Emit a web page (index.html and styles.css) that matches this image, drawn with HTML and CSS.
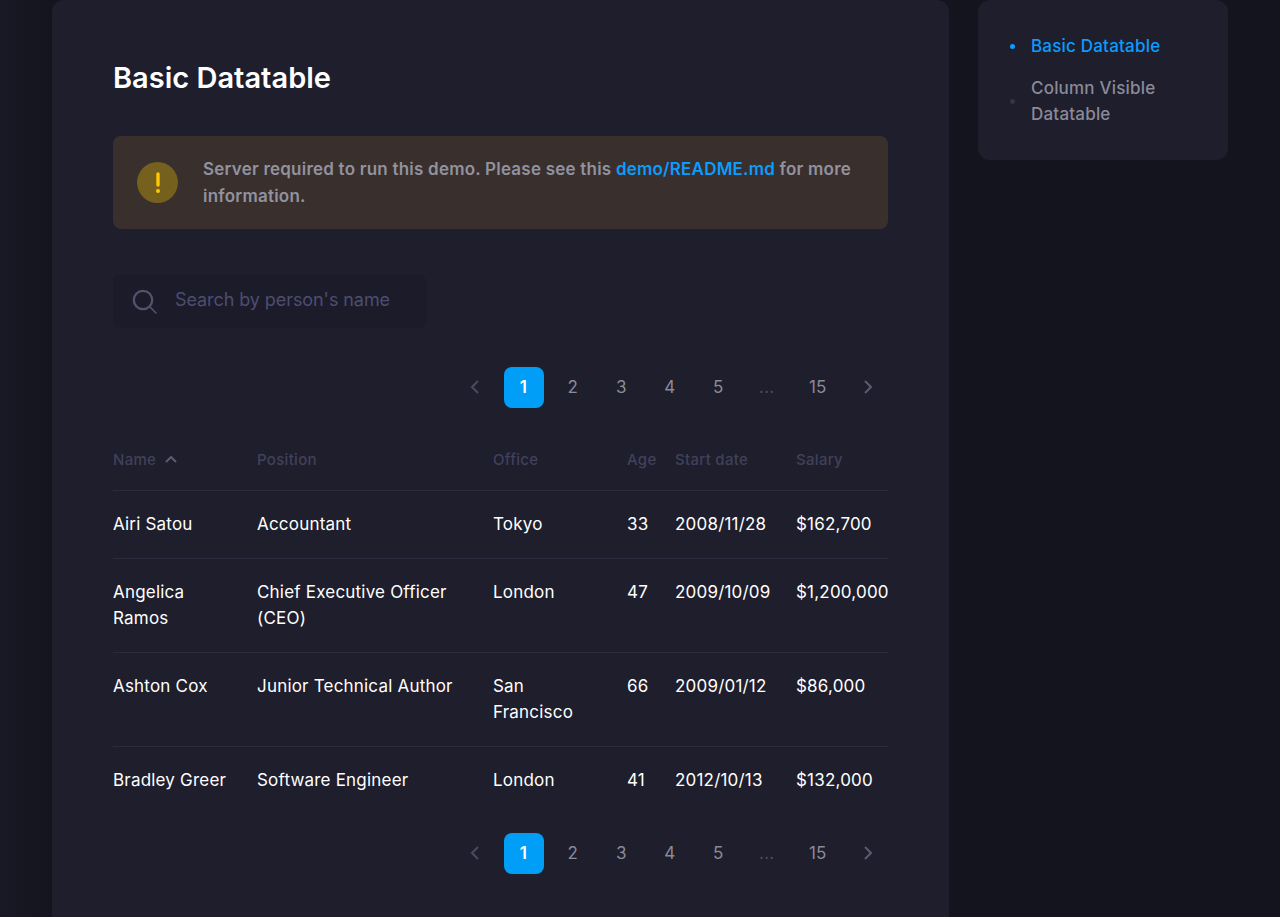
FILE: index.html
```html
<!DOCTYPE html>
<html lang="en">
<head>
    <meta charset="UTF-8">
    <meta name="viewport" content="width=device-width, initial-scale=1.0">
    <title>Basic Datatable</title>
    <link rel="stylesheet" href="styles.css">
</head>
<body>
    <div class="layout">
        <main class="card">
            <h1>Basic Datatable</h1>

            <div class="alert">
                <div class="alert-icon">
                    <svg width="6" height="24" viewBox="0 0 6 24"><path d="M3 3v11" stroke="#ffc700" stroke-width="3.4" stroke-linecap="round"/><circle cx="3" cy="20" r="2" fill="#ffc700"/></svg>
                </div>
                <p>Server required to run this demo. Please see this <a href="#">demo/README.md</a> for more information.</p>
            </div>

            <div class="search">
                <svg width="26" height="26" viewBox="0 0 26 26" fill="none" stroke="#53536d"><circle cx="11" cy="11" r="9.2" stroke-width="2.3"/><path d="M18 18l6 6" stroke-width="1.6" stroke-linecap="round"/></svg>
                <input type="text" placeholder="Search by person's name">
            </div>

            <div class="pager pager-top">
                <a class="arrow" href="#"><svg width="10" height="14" viewBox="0 0 10 14" fill="none" stroke="#4a4a60" stroke-width="2"><path d="M8 1L2 7l6 6"/></svg></a>
                <a class="active" href="#">1</a>
                <a href="#">2</a>
                <a href="#">3</a>
                <a href="#">4</a>
                <a href="#">5</a>
                <span class="dots">...</span>
                <a class="wide" href="#">15</a>
                <a class="arrow" href="#"><svg width="10" height="14" viewBox="0 0 10 14" fill="none" stroke="#5c5c72" stroke-width="2"><path d="M2 1l6 6-6 6"/></svg></a>
            </div>

            <table>
                <thead>
                    <tr>
                        <th class="col-name">Name <svg class="sort" width="12" height="7" viewBox="0 0 12 7" fill="none" stroke="#5c5c72" stroke-width="2"><path d="M1 6l5-5 5 5"/></svg></th>
                        <th class="col-position">Position</th>
                        <th class="col-office">Office</th>
                        <th class="col-age">Age</th>
                        <th class="col-date">Start date</th>
                        <th class="col-salary">Salary</th>
                    </tr>
                </thead>
                <tbody>
                    <tr><td>Airi Satou</td><td>Accountant</td><td>Tokyo</td><td>33</td><td>2008/11/28</td><td>$162,700</td></tr>
                    <tr><td>Angelica Ramos</td><td>Chief Executive Officer (CEO)</td><td>London</td><td>47</td><td>2009/10/09</td><td>$1,200,000</td></tr>
                    <tr><td>Ashton Cox</td><td>Junior Technical Author</td><td>San Francisco</td><td>66</td><td>2009/01/12</td><td>$86,000</td></tr>
                    <tr><td>Bradley Greer</td><td>Software Engineer</td><td>London</td><td>41</td><td>2012/10/13</td><td>$132,000</td></tr>
                </tbody>
            </table>

            <div class="pager">
                <a class="arrow" href="#"><svg width="10" height="14" viewBox="0 0 10 14" fill="none" stroke="#4a4a60" stroke-width="2"><path d="M8 1L2 7l6 6"/></svg></a>
                <a class="active" href="#">1</a>
                <a href="#">2</a>
                <a href="#">3</a>
                <a href="#">4</a>
                <a href="#">5</a>
                <span class="dots">...</span>
                <a class="wide" href="#">15</a>
                <a class="arrow" href="#"><svg width="10" height="14" viewBox="0 0 10 14" fill="none" stroke="#5c5c72" stroke-width="2"><path d="M2 1l6 6-6 6"/></svg></a>
            </div>
        </main>

        <aside class="side">
            <ul>
                <li class="current"><a href="#">Basic Datatable</a></li>
                <li><a href="#">Column Visible Datatable</a></li>
            </ul>
        </aside>
    </div>
</body>
</html>
```

FILE: styles.css
```css
html, body {
    margin: 0;
    height: 917px;
    overflow: hidden;
}
body {
    font-family: Inter, "Liberation Sans", sans-serif;
    font-size: 17px;
    line-height: 26px;
    letter-spacing: 0.2px;
    color: #fff;
    background: linear-gradient(to right, #191925 0, #14141f 52px);
}
a {
    text-decoration: none;
}
.layout {
    display: flex;
    align-items: flex-start;
    gap: 29px;
    padding-left: 52px;
}
.card {
    box-sizing: border-box;
    width: 897px;
    height: 917px;
    padding: 61px 61px 0;
    background-color: #1e1e2d;
    border-radius: 12px 12px 0 0;
}
h1 {
    margin: 0 0 41px;
    font-size: 29px;
    line-height: 34px;
    font-weight: 600;
    letter-spacing: 0;
}

/* alert */
.alert {
    display: flex;
    align-items: center;
    gap: 25px;
    height: 93px;
    box-sizing: border-box;
    padding: 0 24px;
    background-color: #392f2d;
    border-radius: 8px;
}
.alert p {
    margin: 0;
    font-weight: 600;
    line-height: 27px;
    letter-spacing: 0.22px;
    color: #92929f;
}
.alert a {
    color: #0a9cff;
}
.alert-icon {
    flex: none;
    display: flex;
    align-items: center;
    justify-content: center;
    width: 41px;
    height: 41px;
    border-radius: 50%;
    background-color: #75601d;
}

/* search */
.search {
    display: flex;
    align-items: center;
    gap: 17px;
    box-sizing: border-box;
    width: 313px;
    height: 54px;
    margin-top: 45px;
    padding-left: 19px;
    background-color: #1b1b29;
    border-radius: 8px;
}
.search svg {
    flex: none;
    margin-top: 2px;
}
.search input {
    flex: 1;
    min-width: 0;
    border: none;
    outline: none;
    padding: 0 0 4px;
    background: transparent;
    font: 400 18px Inter, "Liberation Sans", sans-serif;
    letter-spacing: -0.08px;
    color: #fff;
}
.search input::placeholder {
    color: #4d4d70;
    opacity: 1;
}

/* pagination */
.pager {
    display: flex;
    justify-content: flex-end;
    align-items: center;
    gap: 8.5px;
    margin-top: 19px;
}
.pager-top {
    margin-top: 39px;
}
.pager a, .pager .dots {
    display: flex;
    align-items: center;
    justify-content: center;
    box-sizing: border-box;
    width: 40px;
    height: 41px;
    padding: 0 0 1px 1.5px;
    border-radius: 8px;
    font-weight: 400;
    color: #8a8a98;
}
.pager .dots {
    color: #4a4a60;
}
.pager .wide {
    width: 45px;
}
.pager .arrow {
    padding-left: 0;
}
.pager .active {
    padding-left: 0;
    background-color: #009ef7;
    color: #fff;
    font-weight: 600;
}

/* table */
table {
    width: 775px;
    margin-top: 18px;
    border-collapse: collapse;
    table-layout: fixed;
}
th {
    height: 61px;
    padding: 3px 0 0;
    text-align: left;
    font-size: 15px;
    font-weight: 500;
    letter-spacing: 0.3px;
    color: #41415a;
}
.sort {
    margin: 0 0 2px 4px;
}
.col-name { width: 144px; }
.col-position { width: 236px; }
.col-office { width: 134px; }
.col-age { width: 48px; }
.col-date { width: 121px; }
.col-salary { width: 92px; }
td {
    padding: 20px 20px 21px 0;
    vertical-align: top;
    border-top: 1px solid #2b2b40;
    font-weight: 400;
}
td:nth-child(4), td:nth-child(5), td:nth-child(6) {
    padding-right: 0;
    white-space: nowrap;
}

/* side nav */
.side {
    box-sizing: border-box;
    width: 250px;
    height: 160px;
    padding: 33px 20px 0 34px;
    background-color: #1e1e2d;
    border-radius: 12px;
}
.side ul {
    margin: 0;
    padding: 0;
    list-style: none;
}
.side li {
    position: relative;
    padding-left: 19px;
    margin-bottom: 16px;
    font-weight: 500;
}
.side li::before {
    content: "";
    position: absolute;
    left: -2px;
    top: 50%;
    width: 5px;
    height: 5px;
    margin-top: -2.5px;
    border-radius: 50%;
    background-color: #33334a;
}
.side a {
    color: #8a8a98;
}
.side .current a {
    color: #0a9cff;
}
.side .current::before {
    background-color: #0a9cff;
}
```
